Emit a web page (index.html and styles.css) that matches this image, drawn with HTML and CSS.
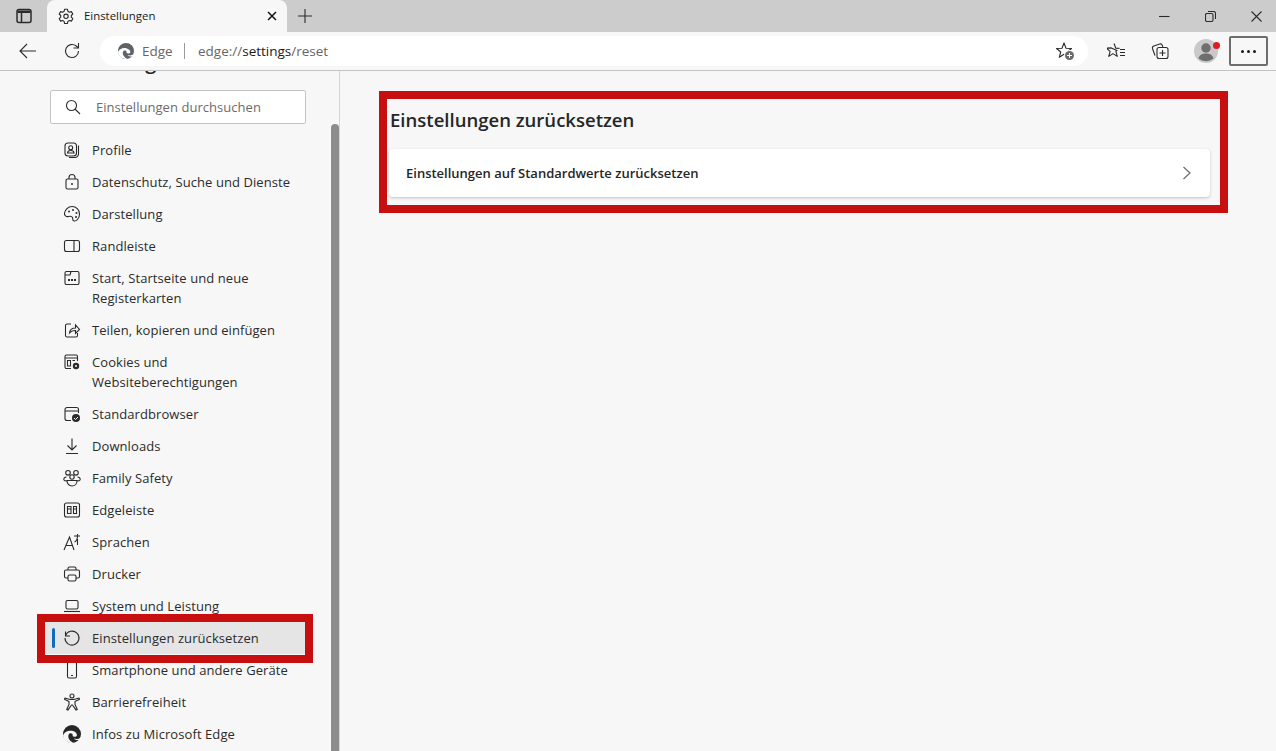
FILE: index.html
```html
<!DOCTYPE html>
<html lang="de">
<head>
<meta charset="utf-8">
<title>Einstellungen</title>
<link rel="stylesheet" href="styles.css">
</head>
<body>
<header class="chrome">
  <div class="tabstrip">
    <button class="strip-btn tabactions"><svg width="16" height="16" viewBox="0 0 16 16"><rect x="1" y="1.500" width="14" height="13" rx="2" class="ln thick"/><path d="M1.500 2.500h13v2.500h-13z" class="dotf"/><path d="M5.500 5v9" class="ln thick"/></svg></button>
    <div class="tab">
      <svg width="16" height="16" viewBox="0 0 16 16"><circle cx="8" cy="8.350" r="2.200" class="ln"/><path d="M6.600 1.200h2.800l.5 2.100 1.500.9 2-.6 1.400 2.400-1.500 1.500v1.700l1.500 1.500-1.400 2.400-2-.6-1.500.9-.5 2.100H6.600l-.5-2.100-1.500-.9-2 .6-1.400-2.400 1.500-1.500V7.500L1.200 6l1.400-2.400 2 .6 1.500-.9z" class="ln round"/></svg>
      <span class="tab-title">Einstellungen</span>
      <svg class="tab-close" width="10" height="10" viewBox="0 0 10 10"><path d="M1 1l8 8M9 1l-8 8" class="ln dark"/></svg>
    </div>
    <button class="strip-btn plus"><svg width="14" height="14" viewBox="0 0 14 14"><path d="M7 0v14M0 7h14" class="ln"/></svg></button>
    <div class="winctl">
      <span class="wc"><svg width="11" height="11" viewBox="0 0 11 11"><path d="M0 5.500h10.500" class="ln"/></svg></span>
      <span class="wc"><svg width="11" height="11" viewBox="0 0 11 11"><rect x=".5" y="2.500" width="7.500" height="8" rx="1.500" class="ln"/><path d="M3 .5h5.500a2 2 0 0 1 2 2V8" class="ln"/></svg></span>
      <span class="wc"><svg width="11" height="11" viewBox="0 0 11 11"><path d="M.5.5l10 10M10.500.5l-10 10" class="ln"/></svg></span>
    </div>
  </div>
  <div class="toolbar">
    <button class="tool back"><svg width="18" height="16" viewBox="0 0 18 16"><path d="M17 8H1M8 1L1 8l7 7" class="ln"/></svg></button>
    <button class="tool reload"><svg width="18" height="18" viewBox="0 0 18 18"><path d="M15.500 9a6.500 6.500 0 1 1-2.300-5L15 5.500" class="ln"/><path d="M15.500 1v5h-5" class="ln"/></svg></button>
    <div class="address">
      <svg class="edge-logo" width="16" height="16" viewBox="0 0 16 16"><circle cx="8" cy="8" r="8" fill="#5f6368"/><path d="M0 9.500C.8 6.500 4.500 4.600 8 5.200c2.200.4 3.800 1.600 4.300 3.200.3 1-.3 1.900-1.400 2-1 .1-2-.1-2.400-.6.500-1.500-.4-2.600-2-2.400C5 7.700 4.400 9.500 4.900 11.300c.5 1.900 2.100 3.400 4.300 4.600-4.300.6-8.400-2.300-9.200-6.400z" fill="#fff"/><path d="M16 11c-1.500 1.300-4.300 1.800-6.500 1 1.200 1.300 3.300 1.700 5 1.400z" fill="#fff"/></svg>
      <span class="addr-edge">Edge</span>
      <span class="addr-sep"></span>
      <span class="url">edge://<b>settings</b>/reset</span>
      <svg class="star-add" width="20" height="20" viewBox="0 0 20 20"><path d="M9 2l2 5.200 5.500.3-4.200 3.500 1.400 5.300L9 13.300l-4.700 3 1.400-5.300-4.200-3.500 5.500-.3z" class="ln round"/><circle cx="14.500" cy="14.500" r="5.500" fill="#fff"/><circle cx="14.500" cy="14.500" r="4.500" fill="#6b6b6b"/><path d="M14.500 12v5M12 14.500h5" stroke="#fff" fill="none"/></svg>
    </div>
    <div class="tools-right">
      <button class="tool fav"><svg width="18" height="18" viewBox="0 0 18 18"><path d="M7 1.500l1.800 4.700 3.700.2M10 8.500l-1.100.9 1.300 5-4.200-2.800-4.200 2.800 1.300-5-3.800-3.200 5-.3z" class="ln round"/><path d="M13 7.500h5M13 10.500h5M13 13.500h5" class="ln"/></svg></button>
      <button class="tool coll"><svg width="18" height="18" viewBox="0 0 18 18"><rect x="6" y="5.500" width="11" height="11" rx="2" class="ln"/><path d="M11.500 8v6M8.500 11h6" class="ln"/><path d="M4 13.500L1.500 6.500a2 2 0 0 1 1.300-2.500l6-2a2 2 0 0 1 2.500 1.300l.5 1.700" class="ln"/></svg></button>
      <div class="avatar"><svg width="24" height="24" viewBox="0 0 24 24"><circle cx="12" cy="12" r="12" fill="#c9c9c9"/><circle cx="12" cy="9" r="4.700" fill="#6e6e6e"/><path d="M4.500 19.500c1-4 4-5 7.500-5s6.500 1 7.500 5a12 12 0 0 1-15 0z" fill="#6e6e6e"/></svg><span class="dot"></span></div>
      <button class="menu-btn"><span></span><span></span><span></span></button>
    </div>
  </div>
</header>
<div class="body">
  <aside class="sidebar">
    <h1 class="side-title">Einstellungen</h1>
    <div class="search">
      <svg width="16" height="16" viewBox="0 0 16 16"><circle cx="6.500" cy="6.500" r="5" class="ln"/><path d="M10 10l5 5" class="ln"/></svg>
      <span>Einstellungen durchsuchen</span>
    </div>
    <nav class="nav">
      <a class="row"><svg width="18" height="18" viewBox="0 0 18 18"><rect x="2" y="2" width="11.500" height="13" rx="3" class="ln"/><circle cx="7.700" cy="6.800" r="2" class="ln"/><path d="M4.500 12c0-2 1.500-2.500 3.200-2.500s3.300.5 3.300 2.500zM15.500 4.500V13a3.500 3.500 0 0 1-3.500 3.500H6" class="ln"/></svg><span>Profile</span></a>
      <a class="row"><svg width="18" height="18" viewBox="0 0 18 18"><rect x="3" y="6" width="12" height="10" rx="1.500" class="ln"/><path d="M6 6V4.500a3 3 0 0 1 6 0V6" class="ln"/><circle cx="9" cy="11" r="1" class="dotf"/></svg><span>Datenschutz, Suche und Dienste</span></a>
      <a class="row"><svg width="18" height="18" viewBox="0 0 18 18"><path d="M9 1.500c4.200 0 7.500 3.300 7.500 7.500S13.500 16.500 11 16c-2-.4-1-2.500-1.500-3.500S7.700 10.800 5.500 11.500 1 10.500 1.500 8C2 5 5 1.500 9 1.500z" class="ln"/><circle cx="6" cy="6.500" r="1" class="dotf"/><circle cx="10" cy="5" r="1" class="dotf"/><circle cx="13.500" cy="8" r="1" class="dotf"/><circle cx="13" cy="12" r="1" class="dotf"/></svg><span>Darstellung</span></a>
      <a class="row"><svg width="18" height="18" viewBox="0 0 18 18"><rect x="1.500" y="3.500" width="15" height="11" rx="2" class="ln"/><path d="M11 3.500v11" class="ln"/></svg><span>Randleiste</span></a>
      <a class="row"><svg width="18" height="18" viewBox="0 0 18 18"><path d="M3.500 2.500h11a1.500 1.500 0 0 1 1.500 1.500v10a1.500 1.500 0 0 1-1.500 1.500h-11A1.500 1.500 0 0 1 2 14V4a1.500 1.500 0 0 1 1.500-1.500zM2 6h5l1-3.500" class="ln"/><path d="M5 10h2v2H5zM8 10h2v2H8zM11 10h2v2h-2z" class="dotf"/></svg><span>Start, Startseite und neue Registerkarten</span></a>
      <a class="row"><svg width="18" height="18" viewBox="0 0 18 18"><path d="M8 3H4a1.500 1.500 0 0 0-1.500 1.500v10A1.500 1.500 0 0 0 4 16h9a1.500 1.500 0 0 0 1.500-1.500V12" class="ln"/><path d="M6.500 12c.3-3.500 3-5 6-5V4l4 4.500-4 4v-3c-3 0-4.800 1-6 2.500z" class="ln"/></svg><span>Teilen, kopieren und einfügen</span></a>
      <a class="row"><svg width="18" height="18" viewBox="0 0 18 18"><path d="M8 15.500H3.500A1.500 1.500 0 0 1 2 14V3.500A1.500 1.500 0 0 1 3.500 2h9.500A1.500 1.500 0 0 1 14.500 3.500V8M2 5h12.500M4.500 7.500h3v5.500h-3zM9.500 7.500h2.500" class="ln"/><circle cx="13" cy="13" r="3.200" class="dotf"/><circle cx="13" cy="13" r="1" fill="#f7f7f7"/></svg><span>Cookies und Websiteberechtigungen</span></a>
      <a class="row"><svg width="18" height="18" viewBox="0 0 18 18"><path d="M8 15.500H4A2 2 0 0 1 2 13.500V4.500a2 2 0 0 1 2-2h9.500a2 2 0 0 1 2 2V8M2 6h13.500" class="ln"/><circle cx="13" cy="13" r="4" class="dotf"/><path d="M11 13l1.500 1.500 2.500-2.500" stroke="#fff" fill="none"/></svg><span>Standardbrowser</span></a>
      <a class="row"><svg width="18" height="18" viewBox="0 0 18 18"><path d="M9 1.500V13M4.500 8.500L9 13l4.500-4.500M3 16.500h12" class="ln"/></svg><span>Downloads</span></a>
      <a class="row"><svg width="18" height="18" viewBox="0 0 18 18"><circle cx="5" cy="3.800" r="2.300" class="ln"/><circle cx="13" cy="3.800" r="2.300" class="ln"/><circle cx="9" cy="8" r="2.200" class="ln"/><path d="M3.500 8C1.500 8 .5 9.500 1 11c.4.700 1.500 1 3 1M14.500 8c2 0 3 1.500 2.500 3-.4.700-1.500 1-3 1M4 11.500h10c0 3-2 5.500-5 5.500s-5-2.500-5-5.500z" class="ln"/></svg><span>Family Safety</span></a>
      <a class="row"><svg width="18" height="18" viewBox="0 0 18 18"><rect x="1.500" y="2" width="15" height="14" rx="2" class="ln"/><path d="M4.500 5.500h3.500v7H4.500zM10.500 5.500h3v7h-3z" class="ln"/><path d="M4.500 8h3.500M10.500 8h3" class="ln"/></svg><span>Edgeleiste</span></a>
      <a class="row"><svg width="18" height="18" viewBox="0 0 18 18"><path d="M1 17L6.500 4 11 17M3 12.500h6.500M11 3h6M14.500 1v2c0 3-1 5-3 6M14.500 6v6" class="ln"/></svg><span>Sprachen</span></a>
      <a class="row"><svg width="18" height="18" viewBox="0 0 18 18"><path d="M5 5V3.500A1.500 1.500 0 0 1 6.500 2h5A1.500 1.500 0 0 1 13 3.500V5M5 13H3a1.500 1.500 0 0 1-1.500-1.500v-5A1.500 1.500 0 0 1 3 5h12a1.500 1.500 0 0 1 1.500 1.500v5A1.500 1.500 0 0 1 15 13h-2" class="ln"/><rect x="5" y="10" width="8" height="6" rx="1.500" class="ln"/></svg><span>Drucker</span></a>
      <a class="row"><svg width="18" height="18" viewBox="0 0 18 18"><rect x="3" y="3.500" width="12" height="8.500" rx="1.500" class="ln"/><path d="M1 14.500h16" class="ln"/></svg><span>System und Leistung</span></a>
      <a class="row active"><svg width="18" height="18" viewBox="0 0 18 18"><path d="M2.500 2.500V7H7" class="ln"/><path d="M2.500 6.500A7 7 0 1 1 2 9" class="ln"/></svg><span>Einstellungen zurücksetzen</span></a>
      <a class="row"><svg width="18" height="18" viewBox="0 0 18 18"><rect x="4.500" y="1" width="9" height="16" rx="1.500" class="ln"/><path d="M8 14.500h2" class="ln"/></svg><span>Smartphone und andere Geräte</span></a>
      <a class="row"><svg width="18" height="18" viewBox="0 0 18 18"><circle cx="9" cy="3" r="2" class="ln"/><path d="M2 5l5 1.500h4L16 5l.5 1.200L12 8.500v3l2.300 5-1.200.6L9.500 12h-1L4.900 17.100l-1.200-.6 2.300-5v-3L1.500 6.200z" class="ln round"/></svg><span>Barrierefreiheit</span></a>
      <a class="row"><svg width="18" height="18" viewBox="0 0 16 16"><circle cx="8" cy="8" r="8" fill="#262626"/><path d="M0 9.500C.8 6.500 4.500 4.600 8 5.200c2.200.4 3.800 1.600 4.300 3.200.3 1-.3 1.900-1.400 2-1 .1-2-.1-2.400-.6.500-1.500-.4-2.600-2-2.400C5 7.700 4.400 9.500 4.900 11.300c.5 1.900 2.100 3.400 4.300 4.600-4.300.6-8.400-2.300-9.200-6.400z" fill="#f7f7f7"/><path d="M16 11c-1.500 1.300-4.300 1.800-6.500 1 1.200 1.300 3.300 1.700 5 1.400z" fill="#f7f7f7"/></svg><span>Infos zu Microsoft Edge</span></a>
    </nav>
    <div class="sb-thumb"></div>
    <div class="mark-nav"></div>
  </aside>
  <main class="main">
    <section class="marked">
      <h2 class="sec-title">Einstellungen zurücksetzen</h2>
      <div class="card">
        <span>Einstellungen auf Standardwerte zurücksetzen</span>
        <svg width="10" height="14" viewBox="0 0 10 14"><path d="M1.500 1L8 7l-6.500 6" stroke="#6b6b6b" stroke-width="1.200" fill="none"/></svg>
      </div>
    </section>
  </main>
</div>
</body>
</html>
```
FILE: styles.css
```css
* { box-sizing: border-box; }
html, body { margin: 0; height: 100%; overflow: hidden; }
body {
  width: 1276px; height: 751px;
  font-family: "Open Sans", "Noto Sans", "Liberation Sans", sans-serif;
  color: #262626; background: #f7f7f7;
  display: flex; flex-direction: column;
}
button { border: 0; background: none; padding: 0; display: flex; align-items: center; justify-content: center; }
svg { flex: none; display: block; }
.ln { fill: none; stroke: #2b2b2b; stroke-width: 1.100; }
.ln.round { stroke-linejoin: round; }
.ln.thick { stroke-width: 1.500; }
.ln.dark { stroke: #111; stroke-width: 1.500; }
.dotf { fill: #2b2b2b; }

.chrome { flex: none; height: 71px; border-bottom: 1px solid #c4c4c4; }
.tabstrip { height: 32px; background: #cccccc; display: flex; align-items: stretch; }
.strip-btn.tabactions { width: 47px; }
.tab {
  width: 240px; background: #f7f7f7; border-radius: 8px 8px 0 0;
  display: flex; align-items: center; padding: 0 10px 0 11px;
}
.tab-title { flex: 1; margin-left: 10px; padding-bottom: 2px; font-size: 11.400px; color: #1a1a1a; }
.strip-btn.plus { width: 36px; }
.winctl { margin-left: auto; display: flex; align-items: center; padding-right: 14px; gap: 35px; }
.wc { display: block; width: 11px; height: 11px; }

.toolbar { height: 38px; background: #f7f7f7; display: flex; align-items: center; }
.tool { flex: none; width: 44px; height: 30px; }
.back { margin-left: 6px; }
.reload { margin-right: 6px; }
.address {
  flex: none; width: 988px; height: 30px; background: #fff; border-radius: 15px;
  display: flex; align-items: center; padding: 0 13px 0 18px; font-size: 13.500px; color: #666;
}
.addr-edge { margin-left: 8px; width: 36px; }
.addr-sep { width: 1px; height: 16px; background: #9a9a9a; margin: 0 13px 0 6px; }
.url { flex: 1; }
.url b { font-weight: 400; color: #1a1a1a; }
.tools-right { display: flex; align-items: center; margin-left: 6px; }
.fav { width: 44px; }
.coll { width: 44px; }
.avatar { position: relative; width: 24px; height: 24px; margin: 0 11px 0 12px; }
.dot { position: absolute; right: -2px; top: 3px; width: 7px; height: 7px; border-radius: 50%; background: #e01b24; }
.menu-btn {
  width: 39px; height: 30px; border: 2px solid #6d6d6d; border-radius: 2px; gap: 3px;
}
.menu-btn span { width: 3px; height: 3px; border-radius: 50%; background: #1a1a1a; }

.body { flex: 1; display: flex; min-height: 0; }
.sidebar {
  flex: none; width: 340px; position: relative; overflow: hidden;
  border-right: 1px solid #d6d6d6; padding: 0 34px 0 44px;
}
.side-title {
  margin: -23px 0 15px 6px; height: 27px; line-height: 27px;
  font-size: 20px; font-weight: 600; color: #262626;
}
.search {
  margin: 0 0 10px 6px; width: 256px; height: 34px; background: #fff;
  border: 1px solid #c4c4c4; border-radius: 2px;
  display: flex; align-items: center; padding-left: 14px; gap: 15px;
  font-size: 13px; letter-spacing: .04px; color: #6b6b6b;
}
.nav { display: flex; flex-direction: column; width: 261px; }
.row {
  display: flex; align-items: flex-start; gap: 11px;
  padding: 6px 12px 6px 19px; font-size: 13px; letter-spacing: .08px; line-height: 20px; color: #2b2b2b;
  position: relative;
}
.row svg { margin-top: 1px; }
.row.active { background: #e5e5e5; }
.row.active::before {
  content: ""; position: absolute; left: 8px; top: 6px; width: 3px; height: 20px;
  background: #0f6cbd; border-radius: 2px;
}
.sb-thumb {
  position: absolute; right: 0; top: 53px; bottom: 0; width: 8px;
  background: #8c8c8c; border-radius: 4px 4px 0 0;
}
.mark-nav {
  position: absolute; left: 37px; top: 543px; width: 276px; height: 49px;
  border: 8px solid #c80f0f;
}

.main { flex: 1; min-width: 0; padding: 20px 48px 0 39px; }
.marked { border: 8px solid #c80f0f; height: 122px; padding: 0 3px 0 3px; width: 849px; }
.sec-title { margin: 0 0 0 0; height: 50px; padding-top: 9px; line-height: 24px; font-size: 18.550px; font-weight: 600; color: #262626; }
.card {
  height: 48px; width: 821px; margin-left: -1px; background: #fff; border-radius: 4px;
  box-shadow: 0 1px 3px rgba(0,0,0,.22);
  display: flex; align-items: center; justify-content: space-between;
  padding: 0 18px 0 17px; font-size: 13px; font-weight: 600; color: #262626;
}
```
